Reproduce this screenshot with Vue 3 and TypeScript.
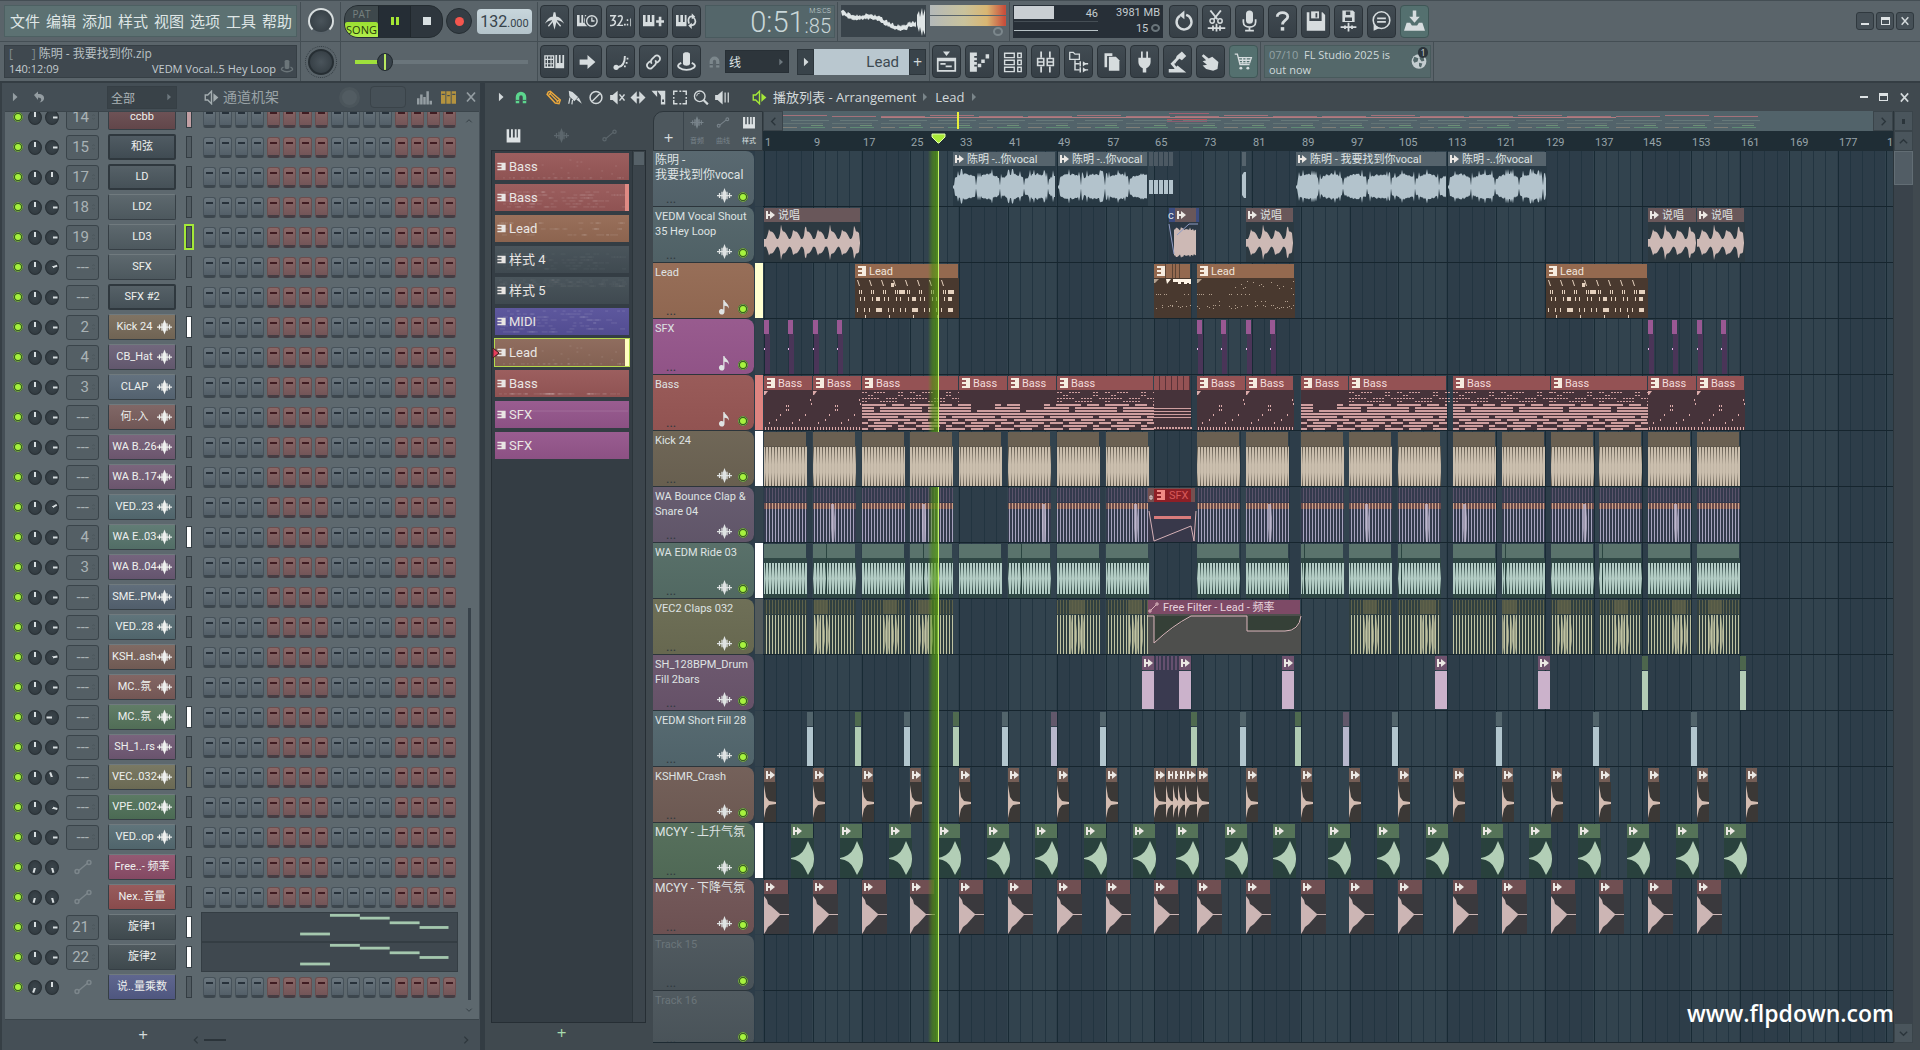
<script setup lang="ts">
import { computed } from 'vue'

interface Tool { icon: string; label: string; teal?: boolean }
interface Channel { slot: string; name: string; color: string; wave?: boolean; sunk?: boolean; bar?: string; a?: number; b?: number; roll?: boolean; auto?: boolean }
interface Track { lines: string[]; color: string; strip?: string; icon?: string; dim?: boolean; cover?: boolean; cjk?: boolean }
interface Shape { t: 'r' | 'p' | 'l' | 'x'; x?: number; y?: number; w?: number; h?: number; d?: string; f: string; s?: string; o?: number }

/* ---------- icons (24 x 24) ---------- */
const icons: Record<string, string> = {
  wave: '<path d="M0 12h24M4 8v8M8 6v12M16 6v12M20 8v8" stroke="currentColor" stroke-width="2"/><path d="M12 0l3 8v8l-3 8-3-8V8z"/>',
  metro: '<path d="M1 15c3-6 6-8 9-8l1-5h2l1 5c3 0 6 2 9 8-3-3-6-4-8-4l-1 3-2 8-2-8-1-3c-2 0-5 1-8 4z"/><path d="M5 18l5-6M19 18l-5-6" stroke="currentColor" stroke-width="1.500"/>',
  pianoClock: '<path d="M0 5h3v9h2V5h2v9h2V5h2a8 8 0 0 0 1 13H0z"/><circle cx="17" cy="12" r="6" fill="none" stroke="currentColor" stroke-width="1.600"/><path d="M17 8v4h3" fill="none" stroke="currentColor" stroke-width="1.500"/>',
  count: '<path d="M0 6h6l-3 5c5 0 4 7-3 6M9 7c5-3 8 1 0 10h6M20 10v2M20 15v2M24 9v9" fill="none" stroke="currentColor" stroke-width="1.700"/><path d="M16 15h2v2h-2z"/>',
  pianoPlus: '<path d="M0 5h3v8h2V5h3v8h2V5h3v13H0zM18 7h3v4h3v3h-3v4h-3v-4h-3v-3h3z"/>',
  pianoLoop: '<path d="M0 5h3v8h2V5h3v8h2V5h2v13H0z"/><path d="M15 15c-2-5 0-9 4-8M20 8c4 4 2 9-3 9" fill="none" stroke="currentColor" stroke-width="2"/><path d="M18 3l4 4-4 3zM18 14l-4 3 4 4z"/>',
  keys: '<path d="M1 5h10v13H1z" fill="none" stroke="currentColor" stroke-width="1.500"/><path d="M4 5v13M8 5v13M1 9h10M1 14h10" stroke="currentColor" stroke-width="1.200"/><path d="M13 4h2v9h2V4h2v9h2V4h2v15H13z"/>',
  arrow: '<path d="M3 9h9V4l9 8-9 8v-5H3z"/>',
  slide: '<circle cx="7" cy="18" r="3"/><path d="M9 18c6-1 8-5 8-13" fill="none" stroke="currentColor" stroke-width="2.200"/><path d="M18 12h2v2h-2zM19 7h2v2h-2zM16 16h2v2h-2z"/>',
  link: '<path d="M10 14a4 4 0 0 1 0-5l4-4a3.700 3.700 0 0 1 5 5l-3 3M14 10a4 4 0 0 1 0 5l-4 4a3.700 3.700 0 0 1-5-5l3-3" fill="none" stroke="currentColor" stroke-width="2"/>',
  hat: '<path d="M8 3c0-3 8-3 8 0v11c0 3-8 3-8 0z"/><path d="M6 13c-9 4 1 8 6 8s15-4 6-8" fill="none" stroke="currentColor" stroke-width="2.200"/>',
  magnet: '<path d="M3 22V11a9 9 0 0 1 18 0v11h-6V11a3 3 0 0 0-6 0v11z"/><path d="M3 17h6M15 17h6" stroke="#3d464c" stroke-width="1.500"/>',
  playlist: '<path d="M8 0h8l-4 5z"/><path d="M2 8h20v14H2z" fill="none" stroke="currentColor" stroke-width="2"/><path d="M2 8h20v3H2zM5 13h6v2H5zM11 16h7v2h-7z"/>',
  roll: '<path d="M1 1h8v4H6v2h3v3H6v2h3v3H6v2h3v6H1zM10 14h4v4h-4zM14 9h4v4h-4zM19 3h4v5h-4z"/>',
  rack: '<path d="M3 2h11v5H3zM3 10h11v5H3zM3 18h11v5H3zM18 2h4v5h-4zM18 10h4v5h-4zM18 18h4v5h-4z" fill="none" stroke="currentColor" stroke-width="1.600"/>',
  mixer: '<path d="M7 0v7M7 17v7M17 0v7M17 17v7" stroke="currentColor" stroke-width="2"/><path d="M3 8h7v8H3zM14 8h7v8h-7z" fill="none" stroke="currentColor" stroke-width="1.800"/><path d="M3 12h7M14 12h7" stroke="currentColor" stroke-width="1.500"/>',
  browser: '<path d="M2 1h4l2 2h5v6H2z" fill="none" stroke="currentColor" stroke-width="1.500"/><path d="M8 10v11h5M8 14h5M14 11v6M14 18v6M17 14h6M17 21h6" fill="none" stroke="currentColor" stroke-width="1.700"/><path d="M17 11l4 3-4 3zM17 18l4 3-4 3z"/>',
  copy: '<path d="M4 2h9v3H7v13H4z"/><path d="M9 6h8l4 4v12H9z"/>',
  plug: '<path d="M8 0h2v7h4V0h2v7h3v5c0 3-2 6-5 7v5h-4v-5c-3-1-5-4-5-7V7h3z"/>',
  robot: '<path d="M11 5l6-5 5 5-5 5-3-2-3 3-3 5" /><path d="M14 6L6 14l5 6" fill="none" stroke="currentColor" stroke-width="3"/><path d="M2 20h6l4-4 10 8H2z"/>',
  hand: '<path d="M4 3l6 5 4-2 7 6-1 8-5 2-8-2-4-4 5-1-5-4 4-1-5-5z"/>',
  cart: '<path d="M2 3h3l3 12h11M6 7h15l-2 6H8M11 7v7M15 7v7M7 10h13" fill="none" stroke="currentColor" stroke-width="1.500"/><circle cx="9" cy="19" r="1.700"/><circle cx="17" cy="19" r="1.700"/>',
  redo: '<path d="M15 5a8.500 8.500 0 1 1-7 1" fill="none" stroke="currentColor" stroke-width="2.800"/><path d="M13 0v10L7 5z"/>',
  cut: '<path d="M5 0l8 10M17 0L9 10" stroke="currentColor" stroke-width="2.200"/><circle cx="7" cy="12" r="2.500" fill="none" stroke="currentColor" stroke-width="1.700"/><circle cx="16" cy="12" r="2.500" fill="none" stroke="currentColor" stroke-width="1.700"/><path d="M2 20h20M12 15v9M8 17v6M16 17v6" stroke="currentColor" stroke-width="2"/>',
  mic: '<rect x="8" y="0" width="8" height="15" rx="4"/><path d="M5 10v3c0 8 14 8 14 0v-3M12 19v4M7 23h10" fill="none" stroke="currentColor" stroke-width="2"/>',
  help: '<path d="M6 7c0-6 12-6 12 0 0 4-6 4-6 9" fill="none" stroke="currentColor" stroke-width="3.200"/><path d="M10 19h4v4h-4z"/>',
  save: '<path d="M2 2h3v10h14V2h1l3 3v18H2z"/><path d="M7 1h9v8H7z"/><path d="M12 3h2v5h-2z" fill="#3e474e"/>',
  saveWave: '<path d="M5 0h12l2 2v11H5z"/><path d="M9 1h5v4H9zM8 8h8v4H8z" fill="#3e474e"/><path d="M3 19h18M12 14v10M8 17v4M16 17v4" stroke="currentColor" stroke-width="2"/>',
  chat: '<circle cx="12" cy="11" r="9.500" fill="none" stroke="currentColor" stroke-width="1.800"/><path d="M7 9h10M7 13h10" stroke="currentColor" stroke-width="1.800"/><path d="M3 16v7l7-3z"/>',
  download: '<path d="M10 0h4v7h4l-6 7-6-7h4zM3 14h4l2 3h6l2-3h4l3 9H0z"/>',
  undo: '<path d="M2 8l8-7v5c9 0 13 4 12 10-1 4-4 6-9 7 5-4 5-10-3-10v5z"/>',
  speaker: '<path d="M2 8h4l6-6v20l-6-6H2z" fill="none" stroke="currentColor" stroke-width="2.200"/><path d="M15 5l8 7-8 7z"/>',
  pencil: '<path d="M3 3l3-1 16 14-2 6-6-1L1 7z" fill="none" stroke="currentColor" stroke-width="2.400"/><path d="M5 5l13 13M8 3L4 8M16 20l5-5" stroke="currentColor" stroke-width="2.200"/>',
  brush: '<path d="M2 1l6 2 9 8-6 7-8-8zM14 15l4-3 5 10z"/><path d="M4 12l-2 10M8 16l-1 7" stroke="currentColor" stroke-width="2"/>',
  no: '<circle cx="12" cy="12" r="9.500" fill="none" stroke="currentColor" stroke-width="2.400"/><path d="M6 18L18 6" stroke="currentColor" stroke-width="2.400"/>',
  mute: '<path d="M1 8h4l8-7v22l-8-7H1z"/><path d="M16 7l8 10M24 7l-8 10" stroke="currentColor" stroke-width="2.400"/>',
  slip: '<path d="M10 2v20L0 12zM14 2v20l10-10z"/><path d="M5 12h14" stroke="currentColor" stroke-width="3"/>',
  slice: '<path d="M0 1h9v10z"/><path d="M9 1h13v22h-7V9z"/><path d="M17 15h3v4h-3z" fill="#3d464c"/>',
  select: '<path d="M2 8V2h6M16 2h6v6M22 16v6h-6M8 22H2v-6M11 2h3M11 22h3M2 11v3M22 11v3" fill="none" stroke="currentColor" stroke-width="2.400"/>',
  zoom: '<circle cx="10" cy="10" r="8.500" fill="none" stroke="currentColor" stroke-width="2.200"/><path d="M16 16l7 7" stroke="currentColor" stroke-width="3.500"/><path d="M5 10a5 5 0 0 1 5-5" fill="none" stroke="currentColor" stroke-width="1.500"/>',
  playback: '<path d="M1 8h4l8-7v22l-8-7H1z"/><path d="M17 4v16M22 4v16" stroke="currentColor" stroke-width="2"/>',
  piano: '<path d="M1 2h4v13h3V2h3v13h3V2h3v13h2V2h4v21H1z"/>',
  curve: '<path d="M6 17L18 7" stroke="currentColor" stroke-width="2"/><circle cx="4" cy="18" r="2.600" fill="none" stroke="currentColor" stroke-width="2"/><circle cx="20" cy="6" r="2.600" fill="none" stroke="currentColor" stroke-width="2"/>',
  note: '<path d="M10 0h2c0 4 8 6 7 14-1-3-3-5-7-5v9a4.500 4.500 0 1 1-2-3z"/>',
  bars: '<path d="M0 13h4v10H0zM5 7h4v16H5zM10 11h4v12h-4zM15 2h4v21h-4zM20 17h4v6h-4z"/>',
  steps: '<path d="M0 2h7v20H0zM8.500 2h7v20h-7zM17 2h7v20h-7z"/><path d="M1 7h5M10 9h4M18 7h5" stroke="#454f56" stroke-width="2"/>',
  pat: '<path d="M1 2h22v20H1v-4h11v-4H1v-4h11V6H1z"/>',
  globe: '<circle cx="12" cy="12" r="11"/><path d="M5 5l6 2-1 5-5 2-2-4zM13 3l6 3 1 5-4 1-3-4zM12 14l5 1-2 6-3-2z" fill="#54686a"/>',
  close: '<path d="M4 3l16 18M20 3L4 21" stroke="currentColor" stroke-width="3.500"/>',
  left: '<path d="M16 4l-8 8 8 8" fill="none" stroke="currentColor" stroke-width="3"/>',
  right: '<path d="M8 4l8 8-8 8" fill="none" stroke="currentColor" stroke-width="3"/>',
  up: '<path d="M4 16l8-8 8 8" fill="none" stroke="currentColor" stroke-width="3"/>',
  down: '<path d="M4 8l8 8 8-8" fill="none" stroke="currentColor" stroke-width="3"/>',
  tri: '<path d="M7 2l11 10L7 22z"/>',
}

const menus = ['文件', '编辑', '添加', '样式', '视图', '选项', '工具', '帮助']
const tools1: Tool[] = [
  { icon: 'metro', label: '节拍器' }, { icon: 'pianoClock', label: '等待输入' }, { icon: 'count', label: '倒计时' },
  { icon: 'pianoPlus', label: '叠加录音' }, { icon: 'pianoLoop', label: '循环录音' },
]
const tools2: Tool[] = [
  { icon: 'keys', label: '键盘' }, { icon: 'arrow', label: '步进' }, { icon: 'slide', label: '滑音' },
  { icon: 'link', label: '链接' }, { icon: 'hat', label: '多重链接' },
]
const tools3: Tool[] = [
  { icon: 'redo', label: '撤销' }, { icon: 'cut', label: '剪切' }, { icon: 'mic', label: '录音' }, { icon: 'help', label: '帮助' },
  { icon: 'save', label: '保存' }, { icon: 'saveWave', label: '导出' }, { icon: 'chat', label: '关于' }, { icon: 'download', label: '更新', teal: true },
]
const tools4: Tool[] = [
  { icon: 'playlist', label: '播放列表' }, { icon: 'roll', label: '钢琴卷帘' }, { icon: 'rack', label: '通道机架' }, { icon: 'mixer', label: '混音器' },
  { icon: 'browser', label: '浏览器' }, { icon: 'copy', label: '样式' }, { icon: 'plug', label: '插件' }, { icon: 'robot', label: '触控' },
  { icon: 'hand', label: '手势' }, { icon: 'cart', label: '商店', teal: true },
]
const editTools = ['pencil', 'brush', 'no', 'mute', 'slip', 'slice', 'select', 'zoom', 'playback']

/* ---------- channel rack ---------- */
const channels: Channel[] = [
  { slot: '14', name: 'ccbb', color: '#674a4e', bar: '#c3a0a4' },
  { slot: '15', name: '和弦', color: '#434f57', sunk: true },
  { slot: '17', name: 'LD', color: '#49555c', sunk: true, b: 0 },
  { slot: '18', name: 'LD2', color: '#515d63' },
  { slot: '19', name: 'LD3', color: '#515d63', bar: 'sel' },
  { slot: '---', name: 'SFX', color: '#515d63', b: 70 },
  { slot: '---', name: 'SFX #2', color: '#49555c', sunk: true },
  { slot: '2', name: 'Kick 24', color: '#766958', wave: true, bar: '#fff' },
  { slot: '4', name: 'CB_Hat', color: '#675c73', wave: true },
  { slot: '3', name: 'CLAP', color: '#586775', wave: true },
  { slot: '---', name: '何..入', color: '#775c5b', wave: true },
  { slot: '---', name: 'WA B..26', color: '#715a73', wave: true },
  { slot: '---', name: 'WA B..17', color: '#715a73', wave: true },
  { slot: '---', name: 'VED..23', color: '#546a71', wave: true, b: 60 },
  { slot: '4', name: 'WA E..03', color: '#56736b', wave: true, bar: '#fff' },
  { slot: '3', name: 'WA B..04', color: '#6a5974', wave: true },
  { slot: '---', name: 'SME..PM', color: '#556371', wave: true },
  { slot: '---', name: 'VED..28', color: '#546a71', wave: true },
  { slot: '---', name: 'KSH..ash', color: '#765f58', wave: true, b: 80 },
  { slot: '---', name: 'MC..氛', color: '#795b59', wave: true },
  { slot: '---', name: 'MC..氛', color: '#55735b', wave: true, bar: '#fff', b: -90 },
  { slot: '---', name: 'SH_1..rs', color: '#6f5873', wave: true },
  { slot: '---', name: 'VEC..032', color: '#706f58', wave: true, bar: '#6c7068', b: -20 },
  { slot: '---', name: 'VPE..002', color: '#4f7058', wave: true, b: 105 },
  { slot: '---', name: 'VED..op', color: '#546a71', wave: true },
  { slot: '', name: 'Free..- 频率', color: '#8b4d68', auto: true, a: 195, b: 165 },
  { slot: '', name: 'Nex..音量', color: '#904f50', auto: true, a: 195, b: 165 },
  { slot: '21', name: '旋律1', color: '#424d52', roll: true, bar: '#fff' },
  { slot: '22', name: '旋律2', color: '#424d52', roll: true, bar: '#fff' },
  { slot: '', name: '说..量乘数', color: '#535b86', auto: true, a: 200, b: 0 },
]
const rollNotes = [[97, 21, 32], [129, 1, 32], [161, 4, 32], [193, 9, 32], [225, 14, 31]]

/* ---------- patterns ---------- */
const rnd = (n: number): number => { const v = Math.sin(n * 12.9898 + 4.1) * 43758.5453; return v - Math.floor(v) }
const patterns = [
  { name: 'Bass', color: '#985858', k: 1 }, { name: 'Bass', color: '#985858', k: 2, strip: '#df8a84' }, { name: 'Lead', color: '#956a54', k: 3 },
  { name: '样式 4', color: '#434e55', k: 2, faint: true }, { name: '样式 5', color: '#434e55', k: 4, faint: true }, { name: 'MIDI', color: '#57519a', k: 5 },
  { name: 'Lead', color: '#8b6758', k: 1, strip: '#ffffc0', sel: true }, { name: 'Bass', color: '#985858', k: 6 },
  { name: 'SFX', color: '#95568c', k: 7 }, { name: 'SFX', color: '#95568c', k: 0 },
]
function patPreview(k: number): string {
  let d = ''
  if (k === 7) return 'M30 10h104'
  if (k === 0) return ''
  for (let i = 0; i < 90; i++) {
    const x = 4 + Math.floor(rnd(i * 3 + k) * 125)
    const row = k === 1 ? (i % 3 ? 25 : 6 + Math.floor(rnd(i) * 18)) : k === 6 ? (i % 2 ? 20 : 24) : k === 4 ? 3 + (i % 4) * 2 : k === 5 ? 3 + (i % 8) * 3 : 8 + (i % 6) * 3
    if ((k === 1 || k === 3 || k === 6) && i % 2) continue
    d += `M${x} ${row}h${k === 1 ? 2 : 3 + (i % 4)}`
  }
  return d
}

/* ---------- tracks ---------- */
const tracks: Track[] = [
  { lines: ['陈明 -', '我要找到你vocal'], color: '#54646c', icon: 'wave', cjk: true },
  { lines: ['VEDM Vocal Shout', '35 Hey Loop'], color: '#526469', icon: 'wave' },
  { lines: ['Lead'], color: '#946a53', strip: '#ffffd0', icon: 'note' },
  { lines: ['SFX'], color: '#95568b', icon: 'note' },
  { lines: ['Bass'], color: '#965654', strip: '#de8480', icon: 'note' },
  { lines: ['Kick 24'], color: '#6b6252', strip: '#ffffff', icon: 'wave', cover: true },
  { lines: ['WA Bounce Clap &', 'Snare 04'], color: '#63586c', icon: 'wave' },
  { lines: ['WA EDM Ride 03'], color: '#546c65', strip: '#ffffff', icon: 'wave' },
  { lines: ['VEC2 Claps 032'], color: '#6a6b52', strip: '#525a5b', icon: 'wave' },
  { lines: ['SH_128BPM_Drum', 'Fill 2bars'], color: '#69546b', icon: 'wave' },
  { lines: ['VEDM Short Fill 28'], color: '#52666d', icon: 'wave' },
  { lines: ['KSHMR_Crash'], color: '#705c55', icon: 'wave' },
  { lines: ['MCYY - 上升气氛'], color: '#526c58', strip: '#ffffff', icon: 'wave', cjk: true },
  { lines: ['MCYY - 下降气氛'], color: '#705455', icon: 'wave', cjk: true },
  { lines: ['Track 15'], color: '#4b555b', dim: true },
  { lines: ['Track 16'], color: '#4b555b', dim: true },
]

const BAR = 6.1
const gridLines = Array.from({ length: 110 }, (_, i) => Math.round(1 + i * BAR * 2))
const barLabels = Array.from({ length: 23 }, (_, i) => ({ n: 1 + i * 8, x: Math.round(2 + i * 8 * BAR) }))

const blocks = [1, 50, 99, 147, 196, 245, 294, 343, 434, 483, 538, 586, 635, 690, 739, 788, 836, 885, 934]
const arrowPath = (x: number): string => `M${x} 4h2v3h2v-3l5 4-5 4v-3h-2v3h-2z`

function mirrored(x: number, w: number, mid: number, amp: (i: number) => number): string {
  const top: string[] = []
  const bot: string[] = []
  for (let i = 0; i <= w; i++) {
    const a = amp(i)
    top.push(`${x + i} ${(mid - a).toFixed(1)}`)
    bot.unshift(`${x + i} ${(mid + a * 0.92).toFixed(1)}`)
  }
  return `M${top.join('L')}L${bot.join('L')}Z`
}
const vocal = (x: number, w: number) => mirrored(x, w, 36, i => {
  const p = (i % 24) / 24
  if (i < 2 || p > 0.94) return 1.5
  const spike = rnd(i + x) > 0.8 ? 5.5 : 0
  return Math.min(18, 7 + 4.5 * Math.sin(p * 3.1) + rnd(i * 7 + x) * 2.5 + spike)
})
const shout = (x: number, w: number) => mirrored(x, w, 36, i => {
  const p = (i % 12.2) / 12.2
  const big = Math.floor(i / 12.2) % 2 === 0 ? 10 : 15
  if (i === w) return 0.5
  const spike = Math.exp(-Math.pow((p - 0.4) / 0.07, 2)) * (big - 6)
  return p < 0.15 ? 4 : 3.5 + 8 * Math.sin((p - 0.15) * 3.5) + spike
})

function build(): Shape[][] {
  const out: Shape[][] = tracks.map(() => [])
  const head = (t: number, x: number, w: number, f: string, body: string) => {
    out[t].push({ t: 'r', x, y: 15, w, h: 40, f: body }, { t: 'r', x, y: 1, w: w - 1, h: 14, f })
  }
  const txt = (t: number, x: number, s: string, f = '#dfe3e3') => out[t].push({ t: 'x', x, s, f })
  const arr = (t: number, x: number) => out[t].push({ t: 'p', d: arrowPath(x), f: '#ece8e4' })
  const pat = (t: number, x: number, f = '#f6ece0') => out[t].push({ t: 'p', d: `M${x} 3h8v10h-8v-2h4v-2h-4v-2h4v-2h-4z`, f })

  // vocals
  for (const [x, w, s] of [[190, 103, '陈明 -..你vocal'], [295, 90, '陈明 -..你vocal'], [533, 151, '陈明 - 我要找到你vocal'], [685, 99, '陈明 -..你vocal']] as [number, number, string][]) {
    head(0, x, w, '#56646d', '#283944')
    out[0].push({ t: 'p', d: vocal(x, w - 1), f: '#b3c3cc' })
    arr(0, x + 2); txt(0, x + 14, s)
  }
  for (let i = 0; i < 5; i++) {
    out[0].push({ t: 'r', x: 386 + i * 5, y: 1, w: 4, h: 14, f: '#4c5963' }, { t: 'r', x: 386 + i * 5, y: 29, w: 4, h: 14, f: '#b3c3cc' })
  }
  out[0].push({ t: 'r', x: 479, y: 1, w: 4, h: 14, f: '#56646d' }, { t: 'p', d: 'M479 24l2-3h2v26h-2l-2-3z', f: '#b3c3cc' })

  // shouts
  for (const [x, w] of [[1, 97], [483, 48], [885, 49], [934, 48]]) {
    head(1, x, w, '#69575a', '#2c3941')
    out[1].push({ t: 'p', d: shout(x, w - 1), f: '#cdb9b5' })
    arr(1, x + 2); txt(1, x + 14, '说唱')
  }
  head(1, 406, 31, '#3c4c80', '#2b3845')
  out[1].push({ t: 'r', x: 412, y: 1, w: 21, h: 14, f: '#69575a' })
  out[1].push({ t: 'p', d: mirrored(411, 22, 36, i => 12 + rnd(i) * 4), f: '#cdb9b5' }, { t: 'l', d: 'M406 17l5 30M414 28l12-11h9', f: '#8f9bc4' })
  arr(1, 414)
  txt(1, 405, 'c')

  // lead
  for (const [x, w, k] of [[92, 104, 0], [391, 37, 1], [434, 98, 1], [783, 102, 0]]) {
    head(2, x, w, '#94694f', '#49392f')
    let d = ''
    if (k === 0) {
      for (let c = 0; c < 8; c++) {
        const b = x + 2 + c * 12
        d += `M${b} 17l1 0 2 6h-1zM${b + 2} 27h1v4h-1zM${b + 4} 27h1v4h-1zM${b + 3} 34h1v4h-1zM${b + 7} 34h${c % 3 === 1 ? 4 : 1}v4h-${c % 3 === 1 ? 4 : 1}zM${b} 45h1v4h-1zM${b + 7} 45h${c % 3 === 1 ? 5 : 1}v4h-${c % 3 === 1 ? 5 : 1}z`
        if (c % 2 === 0) d += `M${b + 8} 52h1v3h-1z`
      }
      for (const c of [44, 93]) d += `M${x + c} 27h6v4h-6z`
      d += `M${x + 36} 20h3v4h-3z`
    } else {
      for (let i = 0; i < w; i += 2) {
        if (rnd(i + x) > 0.4) d += `M${x + i} ${[31, 31, 42, 38][Math.floor(rnd(i * 5) * 4)]}h1v1h-1z`
        if (rnd(i * 3 + x) > 0.6 && i > 36) d += `M${x + i} ${18 + Math.floor(rnd(i) * 8)}h1v1h-1z`
        if (rnd(i * 9 + x) > 0.5) d += `M${x + i} ${42 + Math.floor(rnd(i) * 4)}h1v1h-1z`
      }
      d += `M${x} 16h5l-4 4h-1z`
    }
    out[2].push({ t: 'p', d, f: k ? '#b3a08e' : '#e6d2bf' })
    pat(2, x + 3)
    if (w > 60) txt(2, x + 14, 'Lead', '#f0e4da')
  }
  out[2].push({ t: 'p', d: 'M403 16h5l-4 5zM410 16h18v5h-2v-1h-2v1h-3v-2h-3v2h-3v-2h-5z', f: '#fff4e6' })
  for (const x of [402, 409, 412, 416]) out[2].push({ t: 'r', x, y: 1, w: 1, h: 14, f: '#5c4434' })

  // sfx
  for (const x of [1, 25, 50, 74, 434, 458, 483, 507, 885, 909, 934, 958]) {
    out[3].push({ t: 'r', x: x + 1, y: 15, w: 5, h: 40, f: '#4a3558' }, { t: 'r', x, y: 1, w: 5, h: 14, f: '#995893' }, { t: 'r', x, y: 29, w: 1, h: 2, f: '#e8b8e8' })
  }

  // bass
  for (const [x, w, k] of [[1, 49, 0], [50, 49, 0], [99, 97, 1], [196, 49, 2], [245, 49, 2], [294, 97, 1], [391, 37, 3], [434, 49, 0], [483, 48, 0], [538, 48, 2], [586, 98, 1], [690, 98, 1], [788, 97, 1], [885, 49, 0], [934, 48, 0]]) {
    head(4, x, w, '#945254', '#46333a')
    let d = ''
    if (k === 0) {
      d += `M${x} 16h4l-3 4h-1z`
      for (let i = 1; i < w - 1; i += 3) if (rnd(i) > 0.12) d += `M${x + i} 52h1v3h-1z`
      for (const [a, b] of [[5, 47], [12, 44], [16, 39], [22, 30], [24, 30], [22, 34], [24, 34], [28, 47], [35, 44], [41, 39], [46, 24], [47, 28]]) d += `M${x + a} ${b}h1v2h-1z`
    } else if (k === 3) {
      for (let r = 0; r < 4; r++) d += `M${x} ${33 + r * 3}h${w}v1h-${w}z`
      for (let i = 0; i < w; i += 3) d += `M${x + i} 52h2v2h-2z`
    } else {
      for (let i = 0; i < w; i += 6) {
        for (let r = 0; r < 13; r++) {
          const y = 17 + r * 3
          const p = y < 27 ? 0.42 : y < 33 ? 0.6 : y < 42 ? 0.92 : 0.62
          if (k === 2 && (y < 27 || (y < 33 && rnd(i + 3) < 0.7))) continue
          if (rnd((i % 48) * 13 + r * 7) > p) continue
          const n = Math.min(6, w - i)
          if (y < 27) d += `M${x + i} ${y}h2v1h-2zM${x + i + 3} ${y}h2v1h-2z`
          else d += `M${x + i} ${y}h${n}v2h-${n}z`
        }
      }
    }
    out[4].push({ t: 'p', d, f: k ? '#cf9f9f' : '#dcabaa' })
    if (k !== 3) { pat(4, x + 3); txt(4, x + 14, 'Bass', '#f2dcdc') }
    else for (let i = 5; i < w; i += 6) out[4].push({ t: 'r', x: x + i, y: 1, w: 1, h: 14, f: '#5a3238' })
  }

  // drums
  blocks.forEach((x, n) => {
    head(5, x, 43, '#6a6052', '#5d564b')
    out[5].push({ t: 'r', x, y: 16, w: 43, h: 39, f: 'url(#kickBars)' }, { t: 'r', x, y: 16, w: 43, h: 39, f: 'url(#kickFade)' })
    if (x !== 196) {
      out[6].push({ t: 'r', x, y: 1, w: 43, h: 54, f: '#333a4d' }, { t: 'r', x, y: 1, w: 43, h: 14, f: 'url(#clapHead)' }, { t: 'r', x, y: 16, w: 43, h: 6, f: 'url(#clapTop)' }, { t: 'r', x, y: 22, w: 43, h: 33, f: 'url(#clapBars)' })
      if (n % 2 || n === 12) out[6].push({ t: 'p', d: `M${x + 7 + (n * 11) % 28} 17h3l1 14v10l-1 14h-2l-1-14v-10z`, f: '#c7bfd6', o: 0.7 })
    }
    head(7, x, 43, '#5a736c', '#2f4744')
    out[7].push({ t: 'r', x, y: 20, w: 43, h: 31, f: 'url(#rideBars)' }, { t: 'r', x, y: 20, w: 43, h: 31, f: 'url(#rideFade)' })
    if ([1, 3, 5, 10, 12, 14, 16].includes(n)) out[7].push({ t: 'r', x: x + 3 + (n * 10) % 20, y: 1, w: 1, h: 50, f: '#2a4440' })
    if (x < 190 || x === 294 || x === 343 || x > 580) {
      out[8].push({ t: 'r', x, y: 1, w: 43, h: 54, f: '#303f40' }, { t: 'r', x, y: 1, w: 43, h: 14, f: 'url(#vecHead)' }, { t: 'r', x, y: 16, w: 43, h: 39, f: 'url(#vecBars)' })
      if (n > 0 && n !== 13) {
        const c = x + (n === 1 ? 1 : n === 14 ? 0 : 3 + (n * 9) % 22)
        out[8].push({ t: 'r', x: c, y: 1, w: 14, h: 14, f: '#5f6149', o: 0.8 })
        for (let i = 0; i < 4; i++) out[8].push({ t: 'p', d: `M${c + i * 4} 16h1l2 16v10l-2 13h-1z`, f: '#c5c6a2', o: 0.7 })
      }
    }
  })
  head(6, 385, 48, '#755050', '#38384a')
  out[6].push({ t: 'r', x: 391, y: 2, w: 37, h: 13, f: '#8e1f26' }, { t: 'r', x: 391, y: 29, w: 37, h: 3, f: '#d97b7b' }, { t: 'l', d: 'M386 24l5 30 37-15 3 15 2-30', f: '#d5b0b6' })
  pat(6, 394, '#f08a84'); txt(6, 406, 'SFX', '#d85a5a')
  out[6].push({ t: 'l', d: 'M387 9h2v3h-2z', f: '#e6d6d6' })

  head(8, 385, 153, '#7d4a66', '#4e4f4d')
  out[8].push({ t: 'p', d: 'M385 17h153q-2 15-12 15h-42v-15h-55q-20 12-38 27v-27z', f: '#354037' })
  out[8].push({ t: 'l', d: 'M385 17h6v27q18-17 37-27h56v15h38q14 0 16-15M388 11l5-5M386 11h2v2h-2zM393 4h2v2h-2z', f: '#dcb6bd' })
  txt(8, 400, 'Free Filter - Lead - 频率', '#e8d4de')

  // fills
  for (const x of [379, 416, 519, 672, 775]) {
    out[9].push({ t: 'r', x, y: 1, w: 12, h: 14, f: '#70536f' }, { t: 'r', x, y: 16, w: 12, h: 38, f: '#cbb2cb' })
    arr(9, x + 2)
  }
  out[9].push({ t: 'r', x: 391, y: 1, w: 25, h: 54, f: '#3a3a50' })
  for (const x of [393, 396, 400, 404, 408, 412]) out[9].push({ t: 'r', x, y: 1, w: 2, h: 14, f: '#65506f' })
  for (const x of [879, 977]) out[9].push({ t: 'r', x, y: 1, w: 6, h: 14, f: '#4d664d' }, { t: 'r', x, y: 16, w: 6, h: 39, f: '#b3ccb6' })

  for (const [x, k] of [[44, 0], [92, 1], [141, 0], [190, 1], [239, 0], [288, 2], [337, 0], [428, 1], [477, 0], [532, 1], [580, 2], [629, 0], [733, 0], [830, 0], [928, 0]]) {
    out[10].push({ t: 'r', x, y: 1, w: 6, h: 14, f: ['#52646b', '#4f6a4f', '#62586b'][k] }, { t: 'r', x, y: 16, w: 6, h: 39, f: ['#b2c6ce', '#b0cbb3', '#b7b7cc'][k] })
  }

  // crashes
  for (const x of [1, 50, 99, 147, 196, 245, 294, 343, 391, 403, 410, 415, 422, 434, 483, 538, 586, 635, 690, 739, 788, 836, 885, 934, 983]) {
    head(11, x, 12, '#745d55', '#3b3836')
    out[11].push({ t: 'p', d: `M${x} 18l2 12 3 4 7 1v2l-7 1-3 4-2 9z`, f: '#d3bcb1' })
    arr(11, x + 2)
  }
  // risers
  for (const x of [28, 77, 126, 175, 224, 272, 321, 370, 413, 462, 510, 565, 614, 663, 718, 766, 815, 864, 913, 961]) {
    head(12, x, 23, '#557358', '#29413d')
    out[12].push({ t: 'p', d: `M${x} 35q10-2 14-10l3-7 5 11q2 6 0 14l-5 9-3-6q-4-9-14-10z`, f: '#b2ceb6' })
    arr(12, x + 2)
  }
  // falls
  for (const x of [1, 50, 99, 147, 196, 245, 294, 343, 391, 434, 483, 538, 586, 635, 690, 739, 788, 836, 885, 934]) {
    head(13, x, 25, '#704f52', '#3a393d')
    out[13].push({ t: 'p', d: `M${x} 17l3 4 1 4 3 2 9 8h9v1h-9l-8 9-4 3-2 4-2 3z`, f: '#ccb5b4' })
    arr(13, x + 2)
  }
  return out
}
const lanes = computed(build)

/* ---------- overview + scope ---------- */
const overview = (() => {
  const r: { x: number; y: number; w: number; f: string }[] = []
  for (let i = 0; i < 20; i++) {
    const x = i * 49
    r.push({ x, y: 4 + (i % 3 === 0 ? 0 : 1), w: 44, f: '#a4727a' })
    if (i > 1 && i < 17) r.push({ x, y: 6, w: 49, f: '#b07c80' })
    r.push({ x: x + 8, y: 9, w: 38, f: '#66797a' }, { x, y: 12, w: 40, f: '#637475' }, { x: x + 28, y: 14, w: 12, f: '#6e9078' }, { x, y: 16, w: 14, f: '#7e7f78' }, { x: x + 18, y: 16, w: 24, f: '#5f8a74' })
  }
  r.push({ x: 386, y: 2, w: 40, f: '#a06070' }, { x: 384, y: 8, w: 40, f: '#b0545c' }, { x: 384, y: 10, w: 40, f: '#8c5c70' })
  return r
})()
const scope = (() => {
  let top = 'M0 6'
  let bot = ''
  for (let i = 1; i < 76; i++) {
    const c = 7 + i * 0.24 + 2.5 * Math.sin(i / 7) - (i > 66 ? 3 : 0)
    top += `L${i} ${(c - 1 - rnd(i) * 3).toFixed(1)}`
    bot = `L${i} ${(c + 1 + rnd(i + 50) * 2).toFixed(1)}` + bot
  }
  return top + bot + 'ZM76 10l2-4 1 6 2-9 1 8 2-7v26l-2-5-1 6-2-9-1 5-2-7z'
})()
</script>

<template>
  <div class="app">
    <header class="top">
      <div class="bar-row">
        <nav class="menu"><button v-for="m in menus" :key="m" type="button">{{ m }}</button></nav>
        <div class="cell knob-cell"><span class="big-knob ring"></span></div>
        <div class="cell transport">
          <div class="play-group">
            <div class="mode"><button type="button" class="pat">PAT</button><button type="button" class="song">SONG</button></div>
            <button type="button" class="pause" aria-label="暂停"><i></i><i></i></button>
            <button type="button" class="stop" aria-label="停止"><i></i></button>
          </div>
          <button type="button" class="rec" aria-label="录音"><i></i></button>
          <div class="tempo"><span>132</span><small>.000</small></div>
        </div>
        <div class="cell tools">
          <button v-for="t in tools1" :key="t.icon" type="button" class="tool" :aria-label="t.label"><svg viewBox="0 0 24 24" v-html="icons[t.icon]"></svg></button>
        </div>
        <div class="cell clock"><div class="lcd"><span class="time">0:51</span><span class="cs"><small>M:S:CS</small><span>:85</span></span></div></div>
        <div class="cell monitor">
          <svg class="scope" viewBox="0 0 85 32"><path :d="scope" fill="#dfe5e6" /></svg>
          <div class="meters"><i></i><i></i><span></span></div>
        </div>
        <div class="cell cpu-cell">
          <div class="cpu">
            <div class="load"><div class="load-top"><i></i><span>46</span></div><em></em></div>
            <div class="mem"><span>3981 MB</span><span>15 <b></b></span></div>
          </div>
        </div>
        <div class="tools wide">
          <button v-for="t in tools3" :key="t.icon" type="button" class="tool" :class="{ teal: t.teal }" :aria-label="t.label"><svg viewBox="0 0 24 24" v-html="icons[t.icon]"></svg></button>
        </div>
        <div class="window-buttons">
          <button type="button" aria-label="最小化"><i class="w-min"></i></button>
          <button type="button" aria-label="还原"><i class="w-max"></i></button>
          <button type="button" aria-label="关闭"><svg viewBox="0 0 24 24" v-html="icons.close"></svg></button>
        </div>
      </div>
      <div class="bar-row second">
        <div class="hint">
          <p><span class="brackets">[&nbsp;&nbsp;&nbsp;&nbsp;&nbsp;&nbsp;]</span> 陈明 - 我要找到你.zip</p>
          <p class="line2"><span>140:12:09</span><span>VEDM Vocal..5 Hey Loop</span></p>
          <svg viewBox="0 0 24 24" v-html="icons.hat"></svg>
        </div>
        <div class="cell knob-cell"><span class="big-knob dark"></span></div>
        <div class="cell transport"><input class="volume" type="range" min="0" max="100" value="14" aria-label="主音量" /></div>
        <div class="cell tools">
          <button v-for="t in tools2" :key="t.icon" type="button" class="tool" :aria-label="t.label"><svg viewBox="0 0 24 24" v-html="icons[t.icon]"></svg></button>
        </div>
        <div class="snap">
          <svg viewBox="0 0 24 24" v-html="icons.magnet"></svg>
          <div class="select-box"><select aria-label="吸附"><option>线</option></select><svg viewBox="0 0 24 24" v-html="icons.tri"></svg></div>
        </div>
        <div class="cell pattern">
          <button type="button" aria-label="样式菜单"><svg viewBox="0 0 24 24" v-html="icons.tri"></svg></button>
          <button type="button" class="pat-name">Lead</button>
          <button type="button" aria-label="新样式">+</button>
        </div>
        <div class="tools ten">
          <button v-for="t in tools4" :key="t.icon" type="button" class="tool" :class="{ teal: t.teal }" :aria-label="t.label"><svg viewBox="0 0 24 24" v-html="icons[t.icon]"></svg></button>
        </div>
        <div class="cell news-cell">
          <a class="news" href="#"><span><time>07/10</time> FL Studio 2025 is<br />out now</span><svg viewBox="0 0 24 24" v-html="icons.globe"></svg><b>1</b></a>
        </div>
      </div>
    </header>

    <main class="main">
      <section class="rack">
        <header class="rack-head">
          <svg class="i10" viewBox="0 0 24 24" v-html="icons.tri"></svg>
          <svg class="i12 undo" viewBox="0 0 24 24" v-html="icons.undo"></svg>
          <div class="select-box filter"><select aria-label="筛选"><option>全部</option></select><svg viewBox="0 0 24 24" v-html="icons.tri"></svg></div>
          <svg class="i15 spk" viewBox="0 0 24 24" v-html="icons.speaker"></svg>
          <h2>通道机架</h2>
          <span class="swing"></span><span class="ghost-box"></span>
          <svg class="i15 gap" viewBox="0 0 24 24" v-html="icons.bars"></svg>
          <svg class="i15 gap yellow" viewBox="0 0 24 24" v-html="icons.steps"></svg>
          <svg class="i12 gap" viewBox="0 0 24 24" v-html="icons.close"></svg>
        </header>
        <div class="rack-body">
          <ul class="channels">
            <li v-for="(c, i) in channels" :key="i">
              <span class="led"></span>
              <span class="knob"><i :style="{ transform: `rotate(${c.a ?? 0}deg)` }"></i></span>
              <span class="knob"><i :style="{ transform: `rotate(${c.b ?? 90}deg)` }"></i></span>
              <span v-if="c.auto" class="slot auto"><svg viewBox="0 0 24 24" v-html="icons.curve"></svg></span>
              <span v-else class="slot">{{ c.slot }}<svg viewBox="0 0 24 24"><path d="M8 8l4-4 4 4M8 16l4 4 4-4" fill="none" stroke="currentColor" stroke-width="2" /></svg></span>
              <button type="button" class="name" :class="{ sunk: c.sunk }" :style="{ backgroundColor: c.color }">
                <span>{{ c.name }}</span><svg v-if="c.wave" viewBox="0 0 24 24" v-html="icons.wave"></svg>
              </button>
              <span class="sel" :class="{ picked: c.bar === 'sel' }" :style="c.bar && c.bar !== 'sel' ? { backgroundColor: c.bar } : undefined"></span>
              <svg v-if="c.roll" class="mini-roll" viewBox="0 0 257 30"><rect v-for="(n, k) in rollNotes" :key="k" :x="n[0]" :y="n[1]" :width="n[2]" height="3" fill="#a5c8ae" /></svg>
              <div v-else class="steps"><button v-for="s in 16" :key="s" type="button" :class="{ red: (s - 1) % 8 > 3 }" :aria-label="`${c.name} ${s}`"></button></div>
            </li>
          </ul>
          <div class="rack-scroll"><svg viewBox="0 0 24 24" v-html="icons.up"></svg><i></i><svg viewBox="0 0 24 24" v-html="icons.down"></svg></div>
        </div>
        <footer class="rack-foot">
          <button type="button" aria-label="添加通道">+</button>
          <div class="foot-scroll"><svg viewBox="0 0 24 24" v-html="icons.left"></svg><i></i><svg viewBox="0 0 24 24" v-html="icons.right"></svg></div>
        </footer>
      </section>

      <section class="playlist">
        <header class="pl-head">
          <svg class="i10" viewBox="0 0 24 24" v-html="icons.tri"></svg>
          <svg class="i15 magnet" viewBox="0 0 24 24" v-html="icons.magnet"></svg>
          <div class="edit-tools"><button v-for="t in editTools" :key="t" type="button" :class="t" :aria-label="t"><svg viewBox="0 0 24 24" v-html="icons[t]"></svg></button></div>
          <svg class="i15 green" viewBox="0 0 24 24" v-html="icons.speaker"></svg>
          <h2>播放列表 - Arrangement<i></i>Lead<i></i></h2>
          <div class="pl-win"><i class="w-min"></i><i class="w-max flat"></i><svg viewBox="0 0 24 24" v-html="icons.close"></svg></div>
        </header>
        <div class="pl-body">
          <aside class="picker">
            <div class="picker-tabs">
              <svg class="on" viewBox="0 0 24 24" v-html="icons.piano"></svg>
              <svg viewBox="0 0 24 24" v-html="icons.wave"></svg>
              <svg viewBox="0 0 24 24" v-html="icons.curve"></svg>
            </div>
            <div class="picker-frame">
              <ul>
                <li v-for="(p, i) in patterns" :key="i" :class="{ current: p.sel }" :style="{ backgroundColor: p.color }">
                  <svg class="notes" viewBox="0 0 135 27"><path :d="patPreview(p.k)" stroke="#fff" :stroke-opacity="p.faint ? 0.05 : 0.13" fill="none" /></svg>
                  <svg v-if="p.sel" class="cursor" viewBox="0 0 8 12"><path d="M1 1l6 5-6 5z" fill="#e8405c" stroke="#3a1a20" /></svg>
                  <svg class="pi" viewBox="0 0 24 24" v-html="icons.pat"></svg><span>{{ p.name }}</span>
                  <i v-if="p.strip" :style="{ backgroundColor: p.strip }"></i>
                </li>
              </ul>
              <div class="picker-scroll"><i></i></div>
            </div>
            <button type="button" class="add" aria-label="添加样式">+</button>
          </aside>

          <div class="arr">
            <div class="arr-top">
              <div class="tab">
                <button type="button" aria-label="添加">+</button>
                <div class="kinds">
                  <span><svg viewBox="0 0 24 24" v-html="icons.wave"></svg>音频</span>
                  <span><svg viewBox="0 0 24 24" v-html="icons.curve"></svg>曲线</span>
                  <span class="on"><svg viewBox="0 0 24 24" v-html="icons.piano"></svg>样式</span>
                </div>
              </div>
              <div class="ruler">
                <div class="overview">
                  <button type="button" aria-label="向左"><svg viewBox="0 0 24 24" v-html="icons.left"></svg></button>
                  <svg class="map"><rect v-for="(o, i) in overview" :key="i" :x="o.x" :y="o.y" :width="o.w" height="1" :fill="o.f" /><rect x="174" y="1" width="2" height="17" fill="#e8f03c" /></svg>
                  <button type="button" aria-label="向右"><svg viewBox="0 0 24 24" v-html="icons.right"></svg></button>
                </div>
                <svg class="timeline">
                  <text v-for="b in barLabels" :key="b.n" :x="b.x" y="15">{{ b.n }}</text>
                  <text x="1124" y="15">1</text>
                  <path d="M169 3h13v3l-6 6h-1l-6-6z" fill="#a8e838" stroke="#e4ffb0" />
                </svg>
              </div>
            </div>
            <div class="tracks">
              <svg class="grid" aria-hidden="true">
                <defs>
                  <pattern id="kickBars" width="3" height="60" patternUnits="userSpaceOnUse"><rect width="2" height="60" fill="#cbbfae" /></pattern>
                  <pattern id="rideBars" width="3" height="60" patternUnits="userSpaceOnUse"><rect width="2" height="60" fill="#b4cdc5" /></pattern>
                  <pattern id="clapBars" width="3" height="60" patternUnits="userSpaceOnUse"><rect width="1" height="60" fill="#a6a2bd" /></pattern>
                  <pattern id="clapTop" width="3" height="60" patternUnits="userSpaceOnUse"><rect width="3" height="60" fill="#6b4b4b" /><rect width="1" height="60" fill="#cfa288" /></pattern>
                  <pattern id="clapHead" width="3" height="60" patternUnits="userSpaceOnUse"><rect width="1" height="60" fill="#5a536a" /></pattern>
                  <pattern id="vecBars" width="3" height="60" patternUnits="userSpaceOnUse"><rect width="1" height="60" fill="#bfc2a2" /></pattern>
                  <pattern id="vecHead" width="3" height="60" patternUnits="userSpaceOnUse"><rect width="1" height="60" fill="#5e614a" /></pattern>
                  <linearGradient id="kickFade" x2="0" y2="1"><stop offset="0" stop-color="#cbbfae" stop-opacity="0" /><stop offset=".45" stop-color="#cbbfae" stop-opacity=".9" /><stop offset=".65" stop-color="#cbbfae" stop-opacity=".9" /><stop offset="1" stop-color="#cbbfae" stop-opacity="0" /></linearGradient>
                  <linearGradient id="rideFade" x2="0" y2="1"><stop offset=".1" stop-color="#b4cdc5" stop-opacity="0" /><stop offset=".5" stop-color="#b4cdc5" stop-opacity=".9" /><stop offset=".9" stop-color="#b4cdc5" stop-opacity="0" /></linearGradient>
                  <linearGradient id="glow"><stop offset="0" stop-color="#5a9a10" stop-opacity="0" /><stop offset=".4" stop-color="#4f8f12" stop-opacity=".6" /><stop offset="1" stop-color="#5ea80e" stop-opacity=".75" /></linearGradient>
                </defs>
                <rect v-for="n in 12" :key="'b' + n" :x="Math.round(n * BAR * 16 - BAR * 8)" y="0" width="49" height="100%" fill="#32434e" />
                <rect v-for="(g, i) in gridLines" :key="i" :x="g" y="0" width="1" height="100%" :fill="i % 4 ? '#223440' : '#182a34'" />
              </svg>
              <div v-for="(t, i) in tracks" :key="i" class="track" :class="{ cover: t.cover }">
                <button type="button" class="track-name" :class="{ dim: t.dim, cjk: t.cjk }" :style="{ backgroundColor: t.color }">
                  <span v-for="l in t.lines" :key="l" class="tl">{{ l }}</span>
                  <span class="more">...</span>
                  <svg v-if="t.icon" viewBox="0 0 24 24" v-html="icons[t.icon]"></svg>
                  <span class="led"></span>
                </button>
                <span class="strip" :style="t.strip ? { backgroundColor: t.strip } : undefined"></span>
                <svg class="lane">
                  <template v-for="(s, k) in lanes[i]" :key="k">
                    <rect v-if="s.t === 'r'" :x="s.x" :y="s.y" :width="s.w" :height="s.h" :fill="s.f" :opacity="s.o" />
                    <path v-else-if="s.t === 'p'" :d="s.d" :fill="s.f" :opacity="s.o" />
                    <path v-else-if="s.t === 'l'" :d="s.d" fill="none" :stroke="s.f" />
                    <text v-else :x="s.x" y="12" :fill="s.f">{{ s.s }}</text>
                  </template>
                </svg>
              </div>
              <svg class="playhead" aria-hidden="true"><rect width="11" height="100%" fill="url(#glow)" /><rect x="10" width="1" height="100%" fill="#c6f56a" /></svg>
            </div>
          </div>

          <div class="vscroll">
            <button type="button" aria-label="缩放"><i class="dot"></i></button>
            <button type="button" aria-label="向上"><svg viewBox="0 0 24 24" v-html="icons.up"></svg></button>
            <div class="thumb"></div>
            <button type="button" class="last" aria-label="向下"><svg viewBox="0 0 24 24" v-html="icons.down"></svg></button>
          </div>
        </div>
        <div class="site">www.flpdown.com</div>
      </section>
    </main>
  </div>
</template>

<style>
html, body { height: 100%; background: #40494f; }
</style>

<style scoped>
* { box-sizing: border-box; }
.app { height: 100vh; min-width: 1500px; display: flex; flex-direction: column; overflow: hidden; background: #40494f; color: #d4dadc; font: 12px/16px "Open Sans", "Noto Sans CJK SC", sans-serif; }
button { padding: 0; border: 0; background: none; color: inherit; font: inherit; }
svg { display: block; fill: currentColor; flex: none; }
h2, p, ul { margin: 0; padding: 0; list-style: none; font-weight: 400; }
i, em { font-style: normal; }

.top { flex: none; background: #5a646a; border-bottom: 2px solid #343d43; }
.bar-row { display: flex; align-items: center; height: 41px; border-top: 1px solid #444e54; }
.bar-row.second { height: 40px; }
.menu { display: flex; align-items: center; gap: 6px; width: 293px; height: 32px; margin: 0 3px 0 4px; padding-left: 5px; background: #5c7172; border: 1px solid #4d6062; font-size: 15px; color: #dfe6e6; }
.cell { display: flex; align-items: center; height: 39px; border-left: 1px solid #444e54; flex: none; }
.knob-cell { width: 40px; justify-content: center; }
.big-knob { width: 26px; height: 26px; border-radius: 50%; background: radial-gradient(#4a545b, #30393f); border: 2px solid #262e33; }
.big-knob.ring { border-color: #d8dedf; border-bottom-color: #59636a; }
.big-knob.dark { outline: 1px dotted #343d43; outline-offset: 2px; }
.transport { width: 197px; }
.play-group { display: flex; width: 99px; height: 33px; margin-left: 3px; border-radius: 14px; overflow: hidden; background: #2e363d; border: 1px solid #252d32; }
.mode { display: flex; flex-direction: column; width: 33px; }
.mode button { height: 16px; font: 10px/16px "Open Sans", sans-serif; color: #76817f; background: #3e484c; }
.mode .song { color: #26380c; background: linear-gradient(#9be031, #b4f04e); border-radius: 2px; font-size: 11px; }
.pause, .stop { flex: 1; display: flex; align-items: center; justify-content: center; gap: 2px; border-left: 1px solid #20272c; }
.pause { background: #252d35; }
.pause i { width: 3px; height: 8px; background: #a5e634; }
.stop i { width: 8px; height: 8px; background: #d9e0e2; }
.rec { width: 26px; height: 26px; margin-left: 3px; border-radius: 50%; background: #343d44; display: flex; align-items: center; justify-content: center; border: 1px solid #252d32; }
.rec i { width: 9px; height: 9px; border-radius: 50%; background: #f4564e; }
.tempo { display: flex; align-items: baseline; justify-content: center; width: 55px; height: 25px; margin-left: 5px; border-radius: 4px; background: linear-gradient(#c8d6dc, #b4c3ca); color: #37434b; font: 16px/25px Roboto, sans-serif; }
.tempo small { font-size: 11px; }
.tools { display: flex; align-items: center; gap: 4px; width: 168px; padding-left: 2px; }
.tools.wide { border: 0; width: auto; margin-left: 4px; padding: 0; }
.tools.ten { width: auto; margin-left: 2px; padding: 0; }
.tool { display: flex; align-items: center; justify-content: center; width: 29px; height: 33px; border-radius: 4px; border: 1px solid #2b3339; background: linear-gradient(#414b52, #363f46); color: #d6dcde; }
.tool svg { width: 21px; height: 22px; }
.tool.teal { background: #54706f; border-color: #3f5656; }
.clock { width: 132px; border: 0; }
.lcd { display: flex; justify-content: flex-end; align-items: flex-end; width: 130px; height: 33px; padding-right: 3px; background: #54666a; border: 1px solid #495a5e; color: #c9d6d8; font-family: Roboto, sans-serif; font-weight: 300; }
.time { font-size: 29px; line-height: 30px; }
.cs { display: flex; flex-direction: column; align-items: flex-start; font-size: 20px; line-height: 22px; }
.cs small { align-self: flex-end; font-size: 7px; line-height: 8px; }
.monitor { width: 172px; padding-left: 3px; gap: 4px; border: 0; border-left: 1px solid #444e54; }
.scope { width: 85px; height: 32px; background: #39434a; }
.meters { display: flex; flex-direction: column; gap: 1px; width: 76px; height: 32px; }
.meters i { height: 10px; background: linear-gradient(90deg, #b4b9b9, #c9c29c 45%, #d9b672 75%, #c8503c 98%); }
.meters span { align-self: flex-end; width: 10px; height: 9px; margin-right: 3px; border-radius: 50%; border: 2px solid #7c878c; }
.cpu-cell { width: 156px; padding-left: 3px; }
.cpu { display: flex; width: 150px; height: 33px; background: #272f37; color: #c4ccd0; font: 11px/15px Roboto, sans-serif; }
.load { width: 86px; padding: 1px; }
.load-top { display: flex; justify-content: space-between; height: 16px; border-bottom: 1px solid #454e55; }
.load-top i { width: 40px; height: 13px; background: #c9ced2; }
.load em { display: block; height: 1px; margin-top: 8px; background: #b9c3c7; }
.mem { flex: 1; display: flex; flex-direction: column; align-items: flex-end; padding: 0 3px; line-height: 16px; }
.mem b { display: inline-block; width: 9px; height: 8px; border-radius: 50%; border: 2px solid #6a757b; }
.window-buttons { display: flex; gap: 2px; margin: 0 6px 0 auto; }
.window-buttons button { display: flex; align-items: center; justify-content: center; width: 18px; height: 18px; border: 1px solid #30393f; border-radius: 3px; background: #465057; }
.window-buttons svg { width: 10px; height: 10px; }
.w-min { width: 8px; height: 2px; background: #dde2e4; align-self: center; }
.window-buttons .w-min { margin-top: 6px; }
.w-max { width: 9px; height: 8px; border: 1px solid #dde2e4; border-top-width: 3px; }
.hint { position: relative; width: 293px; height: 33px; margin: 0 3px 0 4px; padding: 0 4px; background: #3f484f; border: 1px solid #363f45; color: #b8c0c4; font-size: 12px; line-height: 15px; }
.brackets { color: #7f8a8e; }
.hint .line2 { display: flex; justify-content: space-between; padding-right: 16px; font-size: 11px; color: #c4ccd0; }
.hint svg { position: absolute; right: 2px; bottom: 2px; width: 14px; height: 17px; color: #6b7579; }
.volume { -webkit-appearance: none; appearance: none; width: 173px; height: 18px; margin: 0 0 0 14px; background: linear-gradient(90deg, #9fe03c 26px, #6a757b 26px) center / 100% 4px no-repeat; }
.volume::-webkit-slider-thumb { -webkit-appearance: none; width: 16px; height: 18px; border-radius: 50%; border: 1px solid #20282d; background: linear-gradient(90deg, #38424a 6px, #b8e860 6px, #b8e860 8px, #38424a 8px); }
.snap { display: flex; align-items: center; gap: 4px; width: 85px; margin-left: 3px; }
.snap > svg { width: 13px; height: 14px; color: #7c878c; }
.select-box { display: flex; align-items: center; width: 64px; height: 23px; background: #2d353b; border: 1px solid #272f35; }
.select-box select { flex: 1; min-width: 0; height: 100%; padding: 0 0 0 3px; border: 0; appearance: none; background: transparent; color: #dfe4e6; font: 12px "Noto Sans CJK SC", sans-serif; }
.select-box svg { width: 8px; height: 10px; margin-right: 3px; color: #6d787e; }
.pattern { width: 137px; padding-left: 4px; border: 0; border-right: 1px solid #444e54; }
.pattern button { display: flex; align-items: center; justify-content: center; width: 17px; height: 26px; background: #39434a; border: 1px solid #2d363c; font-size: 16px; }
.pattern svg { width: 10px; height: 12px; }
.pattern .pat-name { width: 95px; justify-content: flex-end; padding-right: 10px; background: #b9c7cf; color: #3d4a52; border: 0; font: 15px/26px Roboto, sans-serif; }
.news-cell { width: 174px; padding-left: 3px; margin-left: 2px; border-right: 1px solid #444e54; }
.news { position: relative; display: flex; justify-content: space-between; align-items: center; width: 167px; height: 33px; padding: 0 3px 0 4px; background: #54686a; border: 1px solid #485a5c; color: #d0dadb; font-size: 11px; line-height: 15px; text-decoration: none; }
.news time { color: #93a3a5; margin-right: 3px; }
.news svg { width: 16px; height: 17px; color: #c4cdd0; }
.news b { position: absolute; top: 1px; right: 2px; width: 10px; border-radius: 5px; background: #2b343b; text-align: center; font: 9px/11px "Open Sans", sans-serif; }

.main { flex: 1; display: flex; min-height: 0; }
.rack { flex: none; display: flex; flex-direction: column; width: 485px; background: #454f56; border-left: 2px solid #363f45; border-right: 5px solid #333c43; }
.rack-head { flex: none; display: flex; align-items: center; height: 28px; padding-left: 8px; color: #949da2; background: #444e55; }
.i10 { width: 10px; height: 12px; } .i12 { width: 12px; height: 14px; } .i15 { width: 15px; height: 15px; }
.undo { margin-left: 13px; }
.filter { width: 70px; margin-left: 62px; background: #394248; border-color: #363f45; }
.filter select { color: #aab2b6; font-size: 12px; }
.spk { margin-left: 27px; color: #a4adb0; }
.rack-head h2 { width: 116px; margin-left: 4px; font-size: 14px; color: #9aa3a7; }
.swing { width: 21px; height: 21px; border-radius: 50%; border: 3px solid #4b555b; background: #525c62; }
.ghost-box { width: 36px; height: 22px; margin-left: 10px; border: 1px solid #3a4349; border-radius: 4px; background: #465057; }
.gap { margin-left: 9px; } .ghost-box + .gap { margin-left: 11px; } .yellow { color: #b4933f; }
.rack-body { position: relative; flex: 1; min-height: 0; overflow: hidden; margin: 0 1px 0 3px; background: #5d686e; border: 1px solid #3b454b; border-width: 1px 0; }
.channels { margin-top: -10px; }
.channels li { display: flex; align-items: center; height: 30px; padding-left: 8px; }
.led { width: 10px; height: 10px; border-radius: 50%; background: #a6f23e; border: 2px solid #33591c; outline: 1px solid #76a24c; outline-offset: -1px; }
.channels .led { margin-right: 5px; }
.knob { display: flex; justify-content: center; align-items: center; width: 14px; height: 15px; margin-right: 3px; border-radius: 50%; background: radial-gradient(#3c464c, #2e373d); border: 1px solid #283035; }
.knob i { width: 2px; height: 11px; background: linear-gradient(#d8dee0 5px, transparent 5px); }
.slot { display: flex; align-items: center; justify-content: flex-end; width: 33px; height: 25px; margin: 0 9px 0 4px; border: 1px solid #3a444a; border-radius: 3px; background: #545f65; color: #a9b2b5; font: 15px/22px Roboto, sans-serif; }
.slot svg { width: 7px; height: 16px; margin: 0 1px; color: #434d53; }
.slot.auto { border-color: transparent; background: none; justify-content: center; }
.slot.auto svg { width: 18px; height: 18px; color: #7c868b; }
.name { display: flex; align-items: center; justify-content: space-between; width: 68px; height: 26px; padding: 0 3px; border: 1px solid #363f45; border-top-color: #707a7e; border-radius: 2px; background-image: linear-gradient(rgba(255,255,255,.07), rgba(0,0,0,.05)); color: #eef0ee; font: 11px/16px Roboto, "Noto Sans CJK SC", sans-serif; white-space: nowrap; }
.name span { flex: 1; text-align: center; }
.name.sunk { border: 2px solid #2f383e; }
.name svg { width: 15px; height: 16px; }
.sel { width: 6px; height: 22px; margin: 0 11px 0 10px; border: 1px solid #343d43; background: #525c62; flex: none; }
.sel.picked { outline: 2px solid #a4e838; outline-offset: 0; }
.steps { display: flex; gap: 3px; }
.steps button { width: 13px; height: 21px; border: 1px solid #47525a; border-bottom: 3px solid #3c464d; border-radius: 3px; background: linear-gradient(#27313a, #27313a) center 4px / 7px 2px no-repeat, linear-gradient(#6a767e, #535f68); }
.steps button.red { border-color: #6b4d4e; border-bottom-color: #453c42; background: linear-gradient(#401c22, #401c22) center 4px / 7px 2px no-repeat, linear-gradient(#8a6766, #735558); }
.mini-roll { width: 257px; height: 30px; margin-left: -2px; background: #3f484f; border: 1px solid #343d43; }
.rack-scroll { position: absolute; top: 4px; right: 5px; bottom: 4px; display: flex; flex-direction: column; align-items: center; justify-content: space-between; width: 10px; color: #353f45; }
.rack-scroll svg { width: 8px; height: 10px; }
.rack-scroll i { width: 3px; height: 392px; margin: auto 0 5px; background: #38424a; }
.rack-foot { flex: none; display: flex; align-items: center; height: 30px; }
.rack-foot button { margin-left: 133px; width: 16px; font-size: 17px; color: #d4dadc; }
.foot-scroll { display: flex; align-items: center; flex: 1; margin: 10px 9px 0 40px; color: #2e373d; }
.foot-scroll svg { width: 10px; height: 10px; } .foot-scroll i { width: 22px; height: 2px; margin: 0 auto 0 3px; background: #2b343a; }

.playlist { position: relative; flex: 1; min-width: 0; display: flex; flex-direction: column; background: #40494f; }
.pl-head { flex: none; display: flex; align-items: center; height: 28px; padding-left: 11px; color: #d3d9db; }
.magnet { margin-left: 8px; width: 14px; color: #5cd68e; }
.edit-tools { display: flex; gap: 5px; margin: 0 22px 0 18px; }
.edit-tools svg { width: 16px; height: 15px; }
.edit-tools .pencil { color: #eba83c; }
.green { color: #a4e838; }
.pl-head h2 { display: flex; align-items: center; margin-left: 6px; font-size: 13px; }
.pl-head h2 i { width: 4px; height: 0; margin: 0 8px 0 7px; border-left: 4px solid #7a858a; border-top: 4px solid transparent; border-bottom: 4px solid transparent; }
.pl-win { display: flex; align-items: center; gap: 11px; margin: 0 10px 0 auto; }
.pl-win svg { width: 11px; height: 11px; }
.pl-body { flex: 1; display: flex; min-height: 0; margin: 0 7px 7px 6px; }
.picker { flex: none; display: flex; flex-direction: column; width: 155px; margin-right: 7px; }
.picker-tabs { flex: none; display: flex; align-items: center; gap: 31px; height: 39px; padding: 10px 0 0 14px; color: #5c666c; }
.picker-tabs svg { width: 17px; height: 15px; } .picker-tabs .on { color: #dde2e4; }
.picker-frame { flex: 1; display: flex; justify-content: space-between; min-height: 0; background: #343d44; border: 1px solid #262e34; }
.picker ul { display: flex; flex-direction: column; gap: 4px; padding: 2px 3px; }
.picker li { position: relative; display: flex; align-items: center; width: 134px; height: 27px; padding-left: 2px; font: 13px/20px Roboto, "Noto Sans CJK SC", sans-serif; color: #e9e6e4; background-image: linear-gradient(rgba(255,255,255,.04), rgba(0,0,0,.06)); }
.picker li.current { outline: 1px solid #b4d84c; }
.pi { width: 9px; height: 11px; margin-right: 3px; }
.picker li i { position: absolute; right: 0; top: 0; width: 4px; height: 100%; }
.notes { position: absolute; left: 0; top: 0; width: 134px; height: 27px; }
.cursor { position: absolute; left: -3px; top: 8px; width: 8px; height: 12px; z-index: 1; }
.picker-scroll { width: 15px; background: #3c454c; border-left: 1px solid #2b343a; }
.picker-scroll i { display: block; height: 15px; background: #566168; border: 1px solid #394248; }
.picker .add { flex: none; height: 20px; padding-right: 14px; font-size: 17px; color: #a8dcae; }

.arr { flex: 1; min-width: 0; display: flex; flex-direction: column; }
.arr-top { flex: none; display: flex; height: 40px; }
.tab { flex: none; display: flex; width: 110px; border: 1px solid #2d363c; border-radius: 10px 0 0 0; background: #4d575d; }
.tab button { width: 30px; padding-top: 14px; font-size: 17px; border-right: 1px solid #39434a; }
.kinds { flex: 1; display: flex; justify-content: space-around; align-items: center; }
.kinds span { display: flex; flex-direction: column; align-items: center; gap: 6px; font-size: 7px; line-height: 12px; color: #78838a; }
.kinds .on { color: #dde2e4; } .kinds svg { width: 16px; height: 13px; }
.ruler { flex: 1; min-width: 0; display: flex; flex-direction: column; background: #1f2d35; }
.overview { display: flex; height: 20px; background: #52636a; }
.overview button, .vscroll button { display: flex; align-items: center; justify-content: center; width: 20px; flex: none; background: #4a555c; border: 1px solid #3a444a; color: #2b353b; }
.overview svg, .vscroll svg { width: 11px; height: 11px; }
.overview .map { flex: 1; width: auto; min-width: 0; height: 19px; }
.timeline { width: 100%; height: 20px; }
.timeline text { fill: #98a4aa; font: 11px Roboto, sans-serif; }
.tracks { position: relative; flex: 1; min-height: 0; overflow: hidden; border-bottom: 1px solid #1d2a32; background: #2d3d49; }
.grid { position: absolute; left: 110px; top: 0; width: calc(100% - 110px); height: 100%; shape-rendering: crispEdges; }
.track { position: relative; display: flex; height: 56px; }
.track.cover { z-index: 2; }
.track-name { position: relative; flex: none; display: flex; flex-direction: column; align-items: flex-start; width: 101px; height: 56px; padding: 2px 0 0 2px; border-radius: 0 8px 8px 0; border-bottom: 1px solid #2c353b; background-image: linear-gradient(rgba(255,255,255,.03), rgba(0,0,0,.03)); color: #dfe3e3; font: 11px/15px Roboto, "Noto Sans CJK SC", sans-serif; white-space: nowrap; }
.track-name.cjk { font-size: 12px; }
.track-name.dim { color: #6b757a; }
.track-name .more { position: absolute; left: 13px; bottom: 2px; color: #30393e; font-size: 13px; line-height: 10px; }
.track-name svg { position: absolute; right: 22px; bottom: 3px; width: 15px; height: 15px; }
.track-name .led { position: absolute; right: 6px; bottom: 4px; }
.strip { flex: none; width: 8px; height: 55px; margin: 0 0 0 1px; background: #33424c; }
.lane { flex: 1; min-width: 0; width: auto; height: 56px; border-bottom: 1px solid #16252e; }
.lane text { font: 11px Roboto, "Noto Sans CJK SC", sans-serif; }
.lane rect { shape-rendering: crispEdges; }
.playhead { position: absolute; left: 275px; top: 0; width: 11px; height: 100%; }
.vscroll { flex: none; display: flex; flex-direction: column; width: 20px; background: #3a434b; border-left: 1px solid #2b353b; }
.vscroll button { width: 19px; height: 20px; }
.vscroll .dot { width: 3px; height: 5px; background: #2b353b; }
.vscroll .thumb { height: 34px; background: #525d65; border: 1px solid #626d74; }
.vscroll .last { margin-top: auto; height: 20px; }
.site { position: absolute; right: 26px; bottom: 22px; color: #fff; font: 600 23px/30px "Open Sans", sans-serif; }
</style>
